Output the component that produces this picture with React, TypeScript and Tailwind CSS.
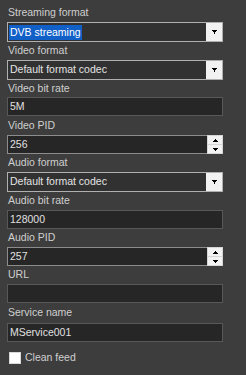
import type {ReactNode} from "react";

const font = {fontFamily: '"Liberation Sans", Arial, sans-serif'};

function Label({children, h = "h-[18px]"}: {children: ReactNode; h?: string}) {
  return <div className={`${h} flex items-center pl-[1px] text-[10.5px] text-[#cfcfcf]`}>{children}</div>;
}

function Combo({value, selected}: {value: string; selected?: boolean}) {
  return (
    <div className="h-[20px] flex border border-[#b0b0b0] bg-[#313131]">
      <div className="flex-1 flex items-center pl-[1px] text-[10.5px] text-[#e4e4e4]">
        {selected ? (
          <span className="bg-[#1160c8] text-white px-[1px] leading-[15px]">{value}</span>
        ) : (
          <span className="pl-[1px]">{value}</span>
        )}
      </div>
      <div className="w-[16px] bg-[#f2f2f2] flex items-center justify-center">
        <svg width="5" height="4" viewBox="0 0 5 4">
          <path d="M0 0h5v1H4v1H3v2H2V2H1V1H0z" fill="#000"/>
        </svg>
      </div>
    </div>
  );
}

function TextBox({value}: {value: string}) {
  return (
    <div className="h-[19px] flex items-center pl-[2px] border border-[#585858] bg-[#262626] text-[10.5px] text-[#e0e0e0]">
      {value}
    </div>
  );
}

function Spin({value}: {value: string}) {
  return (
    <div className="h-[19px] flex">
      <div className="flex-1 flex items-center pl-[2px] border border-[#8c8c8c] border-r-0 bg-[#262626] text-[10.5px] text-[#e0e0e0]">
        {value}
      </div>
      <div className="w-[16px] flex flex-col gap-[1px] bg-[#d6d6d6] p-[1px]">
        <div className="flex-1 bg-[#f2f2f2] flex items-center justify-center">
          <svg width="5" height="3" viewBox="0 0 5 3"><path d="M2 0h1v1h1v1h1v1H0V2h1V1h1z" fill="#000"/></svg>
        </div>
        <div className="flex-1 bg-[#f2f2f2] flex items-center justify-center">
          <svg width="5" height="3" viewBox="0 0 5 3"><path d="M0 0h5v1H4v1H3v1H2V2H1V1H0z" fill="#000"/></svg>
        </div>
      </div>
    </div>
  );
}

export default function App() {
  return (
    <main className="w-[246px] h-[375px] bg-[#3d3d3d] overflow-hidden" style={font}>
      <div className="w-[216px] ml-[7px] pt-[4px] flex flex-col">
        <Label>Streaming format</Label>
        <Combo value="DVB streaming" selected/>
        <Label>Video format</Label>
        <Combo value="Default format codec"/>
        <Label h="h-[17px]">Video bit rate</Label>
        <TextBox value="5M"/>
        <Label h="h-[19px]">Video PID</Label>
        <Spin value="256"/>
        <Label>Audio format</Label>
        <Combo value="Default format codec"/>
        <Label>Audio bit rate</Label>
        <TextBox value="128000"/>
        <Label>Audio PID</Label>
        <Spin value="257"/>
        <Label>URL</Label>
        <TextBox value=""/>
        <Label h="h-[20px]">Service name</Label>
        <TextBox value="MService001"/>
        <div className="mt-[8px] ml-[2px] flex items-center gap-[4px] text-[10.5px] text-[#cfcfcf]">
          <div className="w-[12px] h-[12px] bg-white border border-[#d8d8d8]"/>
          <span>Clean feed</span>
        </div>
      </div>
    </main>
  );
}
